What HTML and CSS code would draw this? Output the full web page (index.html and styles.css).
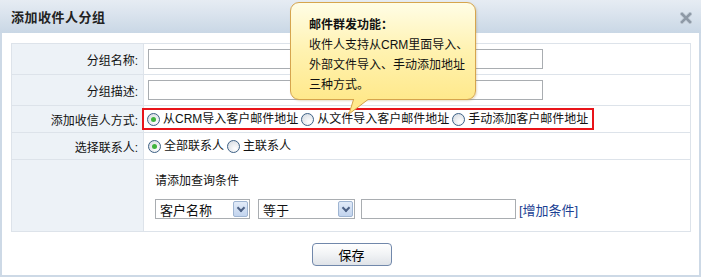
FILE: index.html
```html
<!DOCTYPE html>
<html>
  <head>
    <meta charset="utf-8" />
    <title>添加收件人分组</title>
    <link rel="stylesheet" href="styles.css">
  </head>
  <body>
    <div class="dialog">
      <div class="dialog-head">
        <h2>添加收件人分组</h2>
        <span class="close">
          <svg width="12" height="12" viewBox="0 0 12 12">
            <path d="M2 2 L10 10 M10 2 L2 10" stroke="#c9d3dd" stroke-width="4.4" stroke-linecap="square" />
            <path d="M2 2 L10 10 M10 2 L2 10" stroke="#8e99a6" stroke-width="2.6" stroke-linecap="square" />
          </svg>
        </span>
      </div>

      <div class="dialog-body">
        <table class="form">
          <tr class="row-tall">
            <th>分组名称:</th>
            <td><input type="text" class="text long" /></td>
          </tr>
          <tr class="row-tall">
            <th>分组描述:</th>
            <td><input type="text" class="text long" /></td>
          </tr>
          <tr>
            <th>添加收信人方式:</th>
            <td>
              <div class="ways">
                <label class="radio"><i class="dot on"></i>从CRM导入客户邮件地址</label>
                <label class="radio"><i class="dot"></i>从文件导入客户邮件地址</label>
                <label class="radio"><i class="dot"></i>手动添加客户邮件地址</label>
              </div>
            </td>
          </tr>
          <tr>
            <th>选择联系人:</th>
            <td>
              <div class="plain">
                <label class="radio"><i class="dot on"></i>全部联系人</label>
                <label class="radio"><i class="dot"></i>主联系人</label>
              </div>
            </td>
          </tr>
          <tr class="row-cond">
            <th></th>
            <td>
              <div class="cond">
                <p>请添加查询条件</p>
                <div class="cond-line">
                  <span class="select field"><span>客户名称</span><i class="arrow"></i></span>
                  <span class="select op"><span>等于</span><i class="arrow"></i></span>
                  <input type="text" class="text value" />
                  <a href="#" class="add">[增加条件]</a>
                </div>
              </div>
            </td>
          </tr>
        </table>

        <div class="actions">
          <button type="button">保存</button>
        </div>
      </div>

      <div class="tip">
        <b>邮件群发功能：</b>
        <p>收件人支持从CRM里面导入、<br />外部文件导入、手动添加地址<br />三种方式。</p>
        <svg class="tail" width="26" height="18" viewBox="0 0 26 18">
          <path d="M6 0 L1 16 L22 0" fill="#ffe98c" stroke="#d4a24a" stroke-width="1" />
          <path d="M5 0 L23 0" stroke="#ffe98c" stroke-width="2" />
        </svg>
      </div>
    </div>
  </body>
</html>
```

FILE: styles.css
```css
* {
  box-sizing: border-box;
}

body {
  margin: 0;
  font-family: 'Liberation Sans', 'Noto Sans CJK SC', sans-serif;
  font-size: 12px;
  color: #111;
}

.dialog {
  position: relative;
  width: 701px;
  height: 277px;
  border: 2px solid #cdd9e6;
  border-top: 0;
  background: #fff;
}

.dialog-head {
  height: 33px;
  margin: 0 -2px;
  padding: 0 9px 0 11px;
  display: flex;
  align-items: center;
  justify-content: space-between;
  background: linear-gradient(#e6ecf3, #dbe4ee 40%, #c9d7e5);
}

.dialog-head h2 {
  margin: 0;
  font-size: 13px;
  font-weight: bold;
  color: #222;
  letter-spacing: 0.5px;
}

.close {
  display: flex;
  margin-top: 2px;
}

.dialog-body {
  padding: 10px 9px 0 9px;
}

.form {
  width: 680px;
  border-collapse: collapse;
  border: 1px solid #dde3ea;
}

.form th,
.form td {
  border: 1px solid #dde3ea;
  padding: 0;
  height: 27px;
  vertical-align: middle;
}

.form th {
  width: 132px;
  padding-right: 5px;
  text-align: right;
  font-weight: normal;
  background: #edf2f7;
}

.form .row-tall th,
.form .row-tall td {
  height: 31px;
}

.form .row-cond th,
.form .row-cond td {
  height: 72px;
  vertical-align: top;
}

.text {
  display: block;
  height: 20px;
  border: 1px solid #a9adb1;
  font: inherit;
  padding: 0 3px;
}

.long {
  width: 395px;
  margin-left: 4px;
}

.ways {
  display: inline-flex;
  align-items: center;
  height: 22px;
  margin-left: -2px;
  padding: 0 4px 0 2px;
  border: 2px solid #e8141a;
}

.plain {
  display: flex;
  align-items: center;
  padding-left: 3px;
}

.radio {
  display: inline-flex;
  align-items: center;
  margin-right: 2px;
  line-height: 16px;
}

.ways .radio:last-child,
.plain .radio:last-child {
  margin-right: 0;
}

.dot {
  position: relative;
  width: 13px;
  height: 13px;
  margin: 0 3px 0 1px;
  border-radius: 50%;
  border: 1px solid #3f6286;
  background: radial-gradient(circle at 65% 70%, #fff, #dfe3e8 70%, #c8ced6);
}

.dot.on::after {
  content: '';
  position: absolute;
  left: 3px;
  top: 3px;
  width: 5px;
  height: 5px;
  border-radius: 50%;
  background: #3fb33c;
}

.cond {
  padding: 14px 0 0 11px;
}

.cond p {
  margin: 0 0 11px;
  line-height: 14px;
}

.cond-line {
  display: flex;
  align-items: center;
}

.select {
  display: flex;
  align-items: center;
  justify-content: space-between;
  height: 20px;
  padding: 1px 1px 1px 4px;
  border: 1px solid #a9adb1;
  font-size: 13px;
}

.select.field {
  width: 95px;
  margin-right: 8px;
}

.select.op {
  width: 97px;
  margin-right: 6px;
}

.arrow {
  position: relative;
  width: 15px;
  height: 16px;
  border: 1px solid #9fb5d2;
  border-radius: 2px;
  background: linear-gradient(#e2ebf8, #c2d4ee);
}

.arrow::after {
  content: '';
  position: absolute;
  left: 4px;
  top: 3px;
  width: 4px;
  height: 4px;
  border-right: 2px solid #4d6185;
  border-bottom: 2px solid #4d6185;
  transform: rotate(45deg);
}

.value {
  width: 155px;
  margin-right: 3px;
}

.add {
  color: #1b3f93;
  text-decoration: none;
  font-size: 13px;
}

.actions {
  display: flex;
  justify-content: center;
  padding-top: 11px;
}

.actions button {
  width: 80px;
  height: 23px;
  margin-left: 2px;
  border: 1px solid #7188ab;
  border-radius: 4px;
  background: linear-gradient(#fff, #f1f3f5 50%, #dfe3e8);
  font: inherit;
  font-size: 13px;
  color: #000;
  padding: 0;
}

.tip {
  position: absolute;
  left: 288px;
  top: 2px;
  width: 186px;
  height: 98px;
  padding: 12px 0 0 18px;
  border: 1px solid #d6a54e;
  border-radius: 9px;
  background: linear-gradient(#fffde6, #fff2b0 50%, #ffe98c);
  box-shadow: 1px 1px 2px rgba(160, 120, 40, 0.25);
  line-height: 20px;
  color: #111;
}

.tip b {
  display: block;
}

.tip p {
  margin: 0;
}

.tail {
  position: absolute;
  left: 57px;
  bottom: -17px;
}
```
